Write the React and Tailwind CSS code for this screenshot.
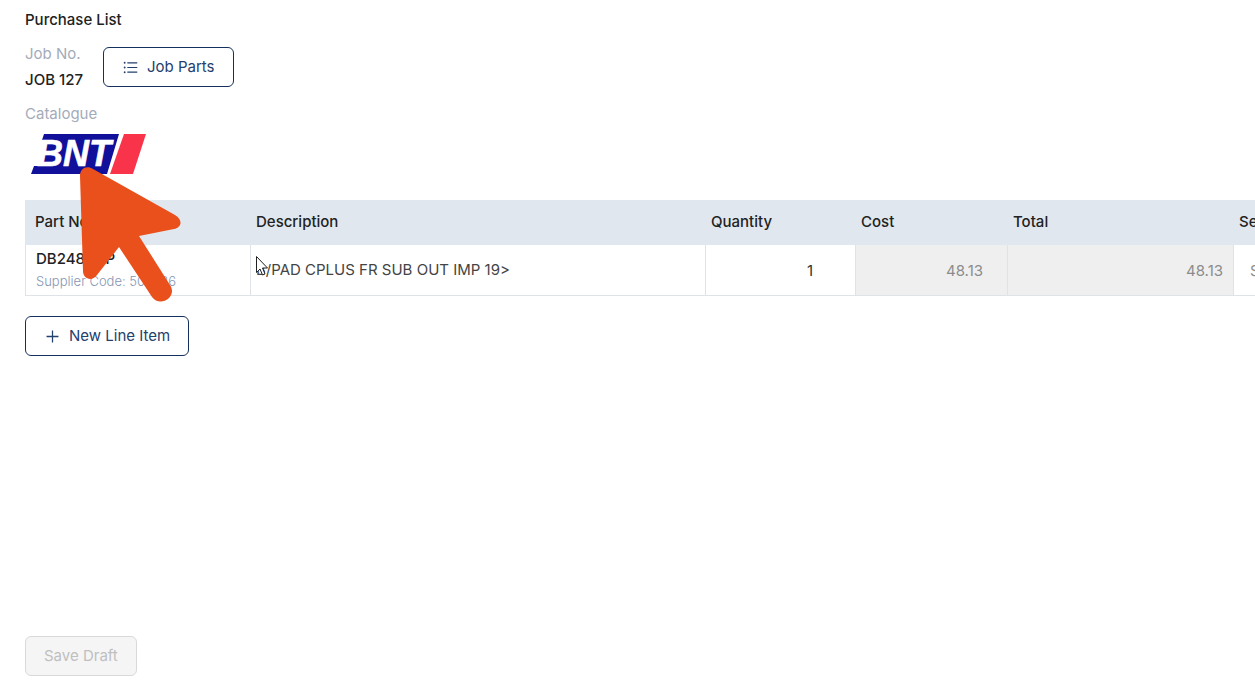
import { AiOutlinePlus, AiOutlineUnorderedList } from 'react-icons/ai';

const columns = [
  ['Part No.', 'w-[226px]'],
  ['Description', 'w-[455px]'],
  ['Quantity', 'w-[150px]'],
  ['Cost', 'w-[152px]'],
  ['Total', 'w-[226px]'],
  ['Sell', 'w-[151px]']
];

const items = [
  {
    partNo: 'DB2483CP',
    supplierCode: '504786',
    description: 'B/PAD CPLUS FR SUB OUT IMP 19>',
    quantity: '1',
    cost: '48.13',
    total: '48.13'
  }
];

function OutlineButton({ icon: Icon, children }) {
  return (
    <button
      type="button"
      className="flex h-10 items-center gap-2 rounded-md border border-[#14305c] bg-white px-[18px] text-[15px] text-[#23406e]"
    >
      <Icon size={17} />
      <span>{children}</span>
    </button>
  );
}

function BntLogo() {
  return (
    <svg viewBox="0 0 116 40" className="ml-1.5 h-10 w-[116px]" role="img" aria-label="BNT">
      <path d="M13 0H88L76 40H0L3 32H8L17 6H11Z" fill="#10109a" />
      <path d="M93 0H115L102 40H79Z" fill="#f9344a" />
      <text
        x="6"
        y="32"
        fill="#fff"
        stroke="#fff"
        strokeWidth="0.6"
        fontFamily="Liberation Sans, sans-serif"
        fontSize="36"
        fontWeight="700"
        fontStyle="italic"
      >
        BNT
      </text>
    </svg>
  );
}

function PointerArrow() {
  return (
    <svg
      viewBox="0 0 102 137"
      className="pointer-events-none absolute top-[166px] left-20 z-10 h-[137px] w-[102px]"
      aria-hidden="true"
    >
      <path
        d="M0 10C0 2 7 -1 13 3L95 49C103 54 102 61 94 63L59 70L90 119C98 131 80 142 72 131L39 81L17 109C12 116 3 113 3 105Z"
        fill="#ea501b"
      />
    </svg>
  );
}

function MouseCursor() {
  return (
    <svg
      viewBox="0 0 12 20"
      className="pointer-events-none absolute top-[256px] left-64 z-10 h-5 w-3"
      aria-hidden="true"
    >
      <path d="M.5 .5V16.5L4 13L6.5 19L9 18L6.5 12H11.5Z" fill="#fff" stroke="#222" />
    </svg>
  );
}

export default function App() {
  return (
    <main className="relative flex min-h-screen flex-col items-start overflow-hidden bg-white pt-2 pb-3 pl-[25px] font-[Inter,sans-serif] text-[15px] leading-6 text-[#222]">
      <h1 className="font-medium">Purchase List</h1>

      <div className="mt-[10px] flex items-center gap-5">
        <div>
          <p className="text-[#a4abb9]">Job No.</p>
          <p className="pt-0.5 font-medium">JOB 127</p>
        </div>
        <OutlineButton icon={AiOutlineUnorderedList}>Job Parts</OutlineButton>
      </div>

      <p className="mt-[10px] text-[#a4abb9]">Catalogue</p>
      <div className="mt-2">
        <BntLogo />
      </div>

      <div className="mt-[26px] w-full overflow-hidden">
        <table className="w-[1360px] table-fixed border-separate border-spacing-0 text-left">
          <thead>
            <tr className="h-[45px] bg-[#e1e7ef]">
              {columns.map(([label, width]) => (
                <th key={label} className={`${width} pb-0.5 pl-[5px] font-medium first:pl-[10px]`}>{label}</th>
              ))}
            </tr>
          </thead>
          <tbody>
            {items.map((item) => (
              <tr key={item.partNo} className="h-[51px]">
                <td className="border-r border-b border-l border-[#dfe2e7] pb-0.5 pl-[10px]">
                  <p className="leading-6 font-medium">{item.partNo}</p>
                  <p className="text-[13px] leading-5 font-light text-[#8796b3]">Supplier Code: {item.supplierCode}</p>
                </td>
                <td className="border-r border-b border-[#dfe2e7] pl-[5px] text-[#444]">{item.description}</td>
                <td className="border-r border-b border-[#dfe2e7]">
                  <input aria-label="Quantity" defaultValue={item.quantity} className="h-[50px] w-full bg-white pr-[42px] text-right text-[#333]" />
                </td>
                <td className="border-r border-b border-[#dfe2e7] bg-[#efefef]">
                  <input aria-label="Cost" disabled defaultValue={item.cost} className="h-[50px] w-full pr-6 text-right text-[#8c8c8c]" />
                </td>
                <td className="border-r border-b border-[#dfe2e7] bg-[#efefef]">
                  <input aria-label="Total" disabled defaultValue={item.total} className="h-[50px] w-full pr-[10px] text-right text-[#8c8c8c]" />
                </td>
                <td className="border-r border-b border-[#dfe2e7]">
                  <input aria-label="Sell" placeholder="Sell" className="h-[50px] w-full pl-4 placeholder:text-[#8c8c8c]" />
                </td>
              </tr>
            ))}
          </tbody>
        </table>
      </div>

      <div className="mt-5">
        <OutlineButton icon={AiOutlinePlus}>New Line Item</OutlineButton>
      </div>

      <button
        type="button"
        disabled
        className="mt-auto h-10 rounded-md border border-[#d9d9d9] bg-[#f5f5f5] px-[18px] text-[15px] text-[#bfbfbf]"
      >
        Save Draft
      </button>

      <PointerArrow />
      <MouseCursor />
    </main>
  );
}
